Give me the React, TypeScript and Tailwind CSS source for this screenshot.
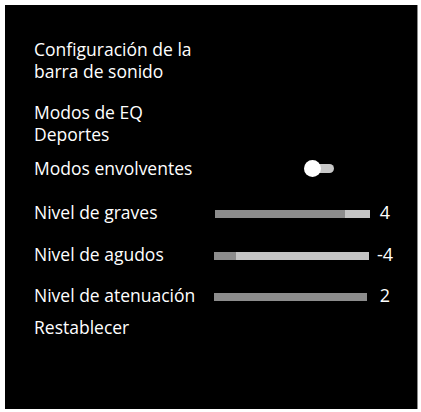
import React from "react";

function Bar({ pct, dark = "#8c8c8c", light = "#c4c4c4", width = 155 }: { pct: number; dark?: string; light?: string; width?: number }) {
  return (
    <div className="flex h-[8px] mt-[3px]" style={{ width }}>
      <div className="h-full" style={{ width: `${pct}%`, backgroundColor: dark }} />
      <div className="h-full flex-1" style={{ backgroundColor: light }} />
    </div>
  );
}

function Row({ label, children, value, className = "" }: { label: string; children?: React.ReactNode; value?: string; className?: string }) {
  return (
    <div className={`flex items-center h-[21px] ${className}`}>
      <div className="w-[180px] shrink-0 whitespace-nowrap">{label}</div>
      <div className="w-[155px] shrink-0 flex items-center">{children}</div>
      {value !== undefined && <div className="w-[32px] text-center text-[18px]">{value}</div>}
    </div>
  );
}

export default function App() {
  return (
    <div className="w-[421px] h-[412px] bg-white pl-[5px] pt-[5px] pr-[3px] pb-[3px]">
      <div
        className="w-full h-full bg-black text-white pl-[29px] pt-[33px] text-[17.5px] flex flex-col border-r border-[#8a8a8a]"
        style={{ fontFamily: '"Open Sans", sans-serif' }}
      >
        <div className="leading-[22px]">
          <div>Configuración de la</div>
          <div>barra de sonido</div>
        </div>
        <div className="leading-[22px] mt-[19px]">
          <div>Modos de EQ</div>
          <div>Deportes</div>
        </div>
        <div className="leading-[21px] mt-[13px]">
          <Row label="Modos envolventes">
            <div className="flex items-center ml-[90px]">
              <div className="relative z-10 w-[17px] h-[17px] rounded-full bg-white" />
              <div className="w-[22px] h-[9px] -ml-[9px] rounded-full bg-[#c8c8c8]" />
            </div>
          </Row>
          <Row label="Nivel de graves" value="4" className="mt-[23px]">
            <div className="ml-[1px]">
              <Bar pct={84} />
            </div>
          </Row>
          <Row label="Nivel de agudos" value="-4" className="mt-[21px]">
            <Bar pct={14} />
          </Row>
          <Row label="Nivel de atenuación" value="2" className="mt-[20px]">
            <Bar pct={100} width={153} />
          </Row>
          <div className="mt-[11px] h-[21px]">Restablecer</div>
        </div>
      </div>
    </div>
  );
}
